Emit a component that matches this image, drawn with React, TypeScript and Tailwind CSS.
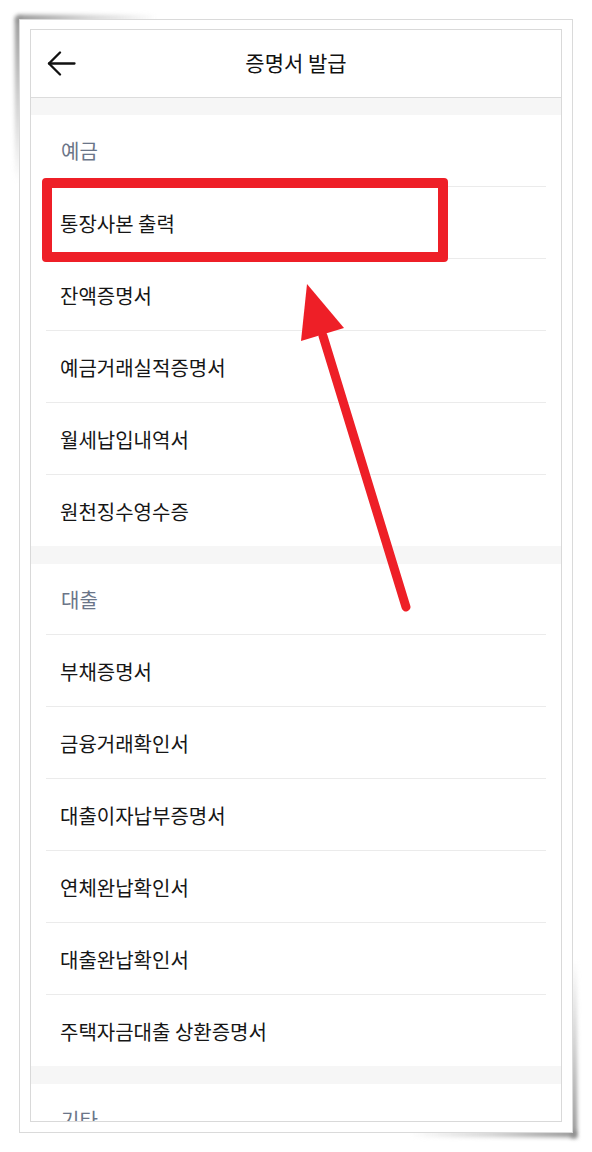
import React from "react";

const font = { fontFamily: '"Noto Sans CJK KR", "Noto Sans", sans-serif' };

function Section({ label, items, head = "h-[71px]" }: { label: string; items: string[]; head?: string }) {
  return (
    <div className="bg-white">
      <div className={`${head} pl-[30px] pt-[22px] text-[20px] leading-[28px] text-[#6b7588]`}>{label}</div>
      <ul className="mx-[15px]">
        {items.map((it) => (
          <li
            key={it}
            className="h-[72px] border-t border-[#ebebeb] flex items-center pl-[14px] pt-[2px] text-[20px] text-[#161616]"
          >
            {it}
          </li>
        ))}
      </ul>
    </div>
  );
}

export default function App() {
  return (
    <div className="relative w-[592px] h-[1152px] bg-white overflow-hidden" style={font}>
      {/* paper curl shadows */}
      <div className="absolute left-[15px] top-[17px] w-[6px] h-[165px] bg-gradient-to-b from-[#8a8a8a] via-[#c8c8c8] to-transparent blur-[2px]" />
      <div className="absolute left-[17px] top-[15px] h-[6px] w-[140px] bg-gradient-to-r from-[#8a8a8a] via-[#d0d0d0] to-transparent blur-[2px]" />
      <div className="absolute left-[571px] top-[960px] w-[6px] h-[178px] bg-gradient-to-t from-[#8a8a8a] via-[#c8c8c8] to-transparent blur-[2px]" />
      <div className="absolute left-[410px] top-[1131px] h-[6px] w-[166px] bg-gradient-to-l from-[#8a8a8a] via-[#d0d0d0] to-transparent blur-[2px]" />

      <div className="relative ml-[19px] mt-[19px] w-[554px] h-[1114px] border border-[#dadada] bg-white pt-[9px] pl-[10px] pr-[10px] pb-[10px]">
        <div className="h-full border border-[#d9d9d9] overflow-hidden bg-white">
          {/* header */}
          <div className="h-[68px] border-b border-[#dcdcdc] grid grid-cols-[1fr_auto_1fr] items-center">
            <div className="pl-[16px] flex items-center">
              <svg width="29" height="25" viewBox="0 0 29 25" fill="none" stroke="#111" strokeWidth="2.3" strokeLinecap="round" strokeLinejoin="round">
                <path d="M2 12.5H27.5" />
                <path d="M13 1.5L2 12.5L13 23.5" />
              </svg>
            </div>
            <div className="text-[21px] text-[#111] pb-[1px]">증명서 발급</div>
            <div />
          </div>
          <div className="h-[17px] bg-[#f6f6f6]" />
          <Section
            label="예금"
            items={["통장사본 출력", "잔액증명서", "예금거래실적증명서", "월세납입내역서", "원천징수영수증"]}
          />
          <div className="h-[18px] bg-[#f6f6f6]" />
          <Section
            label="대출"
            head="h-[70px]"
            items={[
              "부채증명서",
              "금융거래확인서",
              "대출이자납부증명서",
              "연체완납확인서",
              "대출완납확인서",
              "주택자금대출 상환증명서",
            ]}
          />
          <div className="h-[18px] bg-[#f6f6f6]" />
          <Section label="기타" items={[]} />
        </div>
      </div>

      {/* red highlight box */}
      <div className="absolute left-[42px] top-[178px] w-[406px] h-[84px] border-[10px] border-[#ee1f27] rounded-[4px]" />

      {/* red arrow */}
      <svg className="absolute left-0 top-0" width="592" height="1152" viewBox="0 0 592 1152">
        <line x1="323" y1="336" x2="406" y2="607" stroke="#ee1f27" strokeWidth="9" strokeLinecap="round" />
        <polygon points="307,284 301,341 344,328" fill="#ee1f27" />
      </svg>
    </div>
  );
}
